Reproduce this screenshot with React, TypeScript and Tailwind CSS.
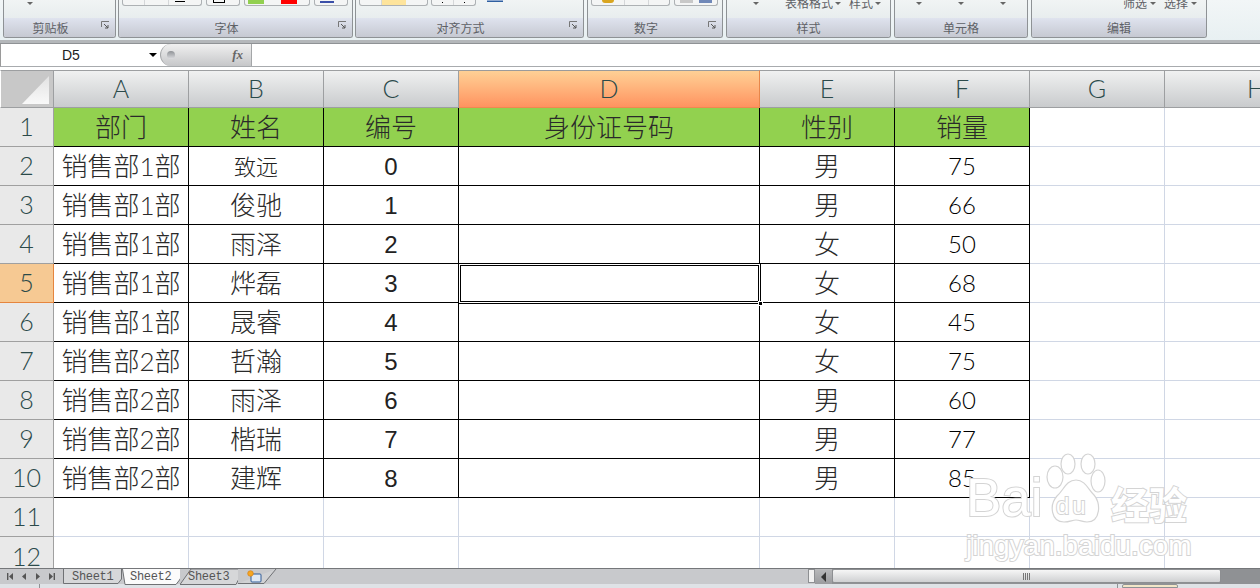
import { FC, ReactNode } from 'react';

const rows = [
    { dept: '销售部1部', name: '致远', num: 0, sex: '男', sales: 75 },
    { dept: '销售部1部', name: '俊驰', num: 1, sex: '男', sales: 66 },
    { dept: '销售部1部', name: '雨泽', num: 2, sex: '女', sales: 50 },
    { dept: '销售部1部', name: '烨磊', num: 3, sex: '女', sales: 68 },
    { dept: '销售部1部', name: '晟睿', num: 4, sex: '女', sales: 45 },
    { dept: '销售部2部', name: '哲瀚', num: 5, sex: '女', sales: 75 },
    { dept: '销售部2部', name: '雨泽', num: 6, sex: '男', sales: 60 },
    { dept: '销售部2部', name: '楷瑞', num: 7, sex: '男', sales: 77 },
    { dept: '销售部2部', name: '建辉', num: 8, sex: '男', sales: 85 },
];

const cjk = "font-['Lato','Noto_Sans_CJK_SC',sans-serif] font-light";
const gridCols = 'grid grid-cols-[54px_135px_135px_135px_301px_135px_135px_135px_184px]';

const Launcher = () => (
    <svg width="9" height="9" viewBox="0 0 9 9" className="absolute right-[5px] top-[3px]">
        <path d="M0.5 6V0.5H8" fill="none" stroke="#777" />
        <path d="M3 3l4 4M7 4v3H4" fill="none" stroke="#555" />
    </svg>
);

const Group: FC<{ width: string; label: string; launcher?: boolean; children?: ReactNode }> = ({ width, label, launcher, children }) => (
    <div className={`${width} h-[38px] flex flex-col shrink-0 border-x border-b border-[#8e9295] rounded-b-[3px] overflow-hidden`}>
        <div className="h-[18px] bg-gradient-to-b from-[#f1f4f4] to-[#e8edee] overflow-hidden flex items-start">{children}</div>
        <div className={`h-[19px] relative bg-gradient-to-b from-[#dfe3ee] to-[#c6c9d2] flex items-center justify-center text-[12px] text-[#5e6166] font-['Noto_Sans_CJK_SC',sans-serif] ${launcher ? 'pr-[18px]' : ''}`}>
            {label}
            {launcher && <Launcher />}
        </div>
    </div>
);

const Btn: FC<{ className: string; children?: ReactNode }> = ({ className, children }) => (
    <div className={`${className} h-[6px] border-x border-b border-[#adb1b4] rounded-b-[3px] bg-[#f4f5f5] flex overflow-hidden shrink-0`}>{children}</div>
);

const Caret = ({ className = '' }: { className?: string }) => (
    <span className={`${className} w-0 h-0 border-x-[3px] border-x-transparent border-t-[3px] border-t-[#666] shrink-0 mt-[2px]`} />
);

const CutText: FC<{ className: string; text: string }> = ({ className, text }) => (
    <span className={`${className} h-[9px] text-[12px] leading-[5px] text-[#5e6166] font-['Noto_Sans_CJK_SC',sans-serif] shrink-0`}>{text}</span>
);

const Ribbon = () => (
    <div className="h-[40px] bg-gradient-to-b from-[#f2f6f7] to-[#e8f0f2] flex pl-[3px] gap-[3px] shrink-0">
        <Group width="w-[113px]" label="剪贴板" launcher>
            <Caret className="ml-[23px]" />
        </Group>
        <Group width="w-[235px] -ml-px" label="字体" launcher>
            <Btn className="ml-[3px] w-[80px]">
                <div className="w-[22px] border-r border-[#d5d7d9]" />
                <div className="w-[24px] border-r border-[#d5d7d9]" />
                <div className="ml-[6px] w-[10px] h-[1px] mt-[1px] bg-black" />
            </Btn>
            <Btn className="ml-[4px] w-[34px]">
                <div className="ml-[6px] w-[12px] h-[3px] border-x border-b border-black" />
            </Btn>
            <Btn className="ml-[4px] w-[66px]">
                <div className="ml-[3px] w-[16px] h-[4px] bg-[#92d050]" />
                <div className="ml-[17px] w-[16px] h-[4px] bg-[#ff0000]" />
            </Btn>
            <Btn className="ml-[4px] w-[34px]">
                <div className="ml-[5px] w-[14px] h-[3px] border-b-2 border-[#3a4fa8]" />
            </Btn>
        </Group>
        <Group width="w-[229px] -ml-px" label="对齐方式" launcher>
            <Btn className="ml-[3px] w-[69px]">
                <div className="w-[22px] border-r border-[#d5d7d9]" />
                <div className="w-[24px] bg-[#fee49c]" />
            </Btn>
            <Btn className="ml-[3px] w-[45px]">
                <div className="w-[22px] border-r border-[#d5d7d9] flex justify-center"><div className="w-px h-px mt-[2px] bg-black" /></div>
                <div className="w-[22px] flex justify-center"><div className="w-px h-px mt-[2px] bg-black" /></div>
            </Btn>
            <div className="ml-[11px] w-[16px] h-[2px] bg-[#8fa9d0] border-b border-[#2f5fa0] shrink-0" />
        </Group>
        <Group width="w-[136px]" label="数字" launcher>
            <Btn className="ml-[3px] w-[79px]">
                <div className="w-[33px] border-r border-[#d5d7d9] flex justify-center"><div className="w-[12px] h-[3px] rounded-b bg-[#d9a520]" /></div>
                <div className="w-[24px] border-r border-[#d5d7d9]" />
            </Btn>
            <Btn className="ml-[4px] w-[44px]">
                <div className="ml-[5px] w-[13px] h-[3px] bg-[#c8c8c8]" />
                <div className="ml-[6px] w-[13px] h-[3px] bg-[#7088b8]" />
            </Btn>
        </Group>
        <Group width="w-[165px]" label="样式">
            <Caret className="ml-[26px]" />
            <CutText className="ml-[26px]" text="表格格式" />
            <Caret className="ml-[2px]" />
            <CutText className="ml-[8px]" text="样式" />
            <Caret className="ml-[2px]" />
        </Group>
        <Group width="w-[134px]" label="单元格">
            <Caret className="ml-[21px]" />
            <Caret className="ml-[36px]" />
            <Caret className="ml-[36px]" />
        </Group>
        <Group width="w-[176px]" label="编辑">
            <CutText className="ml-[91px]" text="筛选" />
            <Caret className="ml-[3px]" />
            <CutText className="ml-[8px]" text="选择" />
            <Caret className="ml-[3px]" />
        </Group>
    </div>
);

const FormulaBar = () => (
    <>
        <div className="h-[4px] bg-[#b4b7ba] border-b border-[#8f9295] shrink-0" />
        <div className="h-[23px] flex border-b border-[#a8abae] border-l border-l-[#9a9a9a] bg-white shrink-0">
            <div className="w-[159px] flex items-center pl-[61px] text-[14px] text-[#222] font-['Liberation_Sans',sans-serif]">
                D5
                <span className="ml-[69px] w-0 h-0 border-x-[4px] border-x-transparent border-t-[4px] border-t-black" />
            </div>
            <div className="w-[92px] rounded-l-[11px] border border-[#a4a6a8] border-y-0 bg-gradient-to-b from-[#f0f0f0] to-[#c6c7c9] flex items-center pl-[6px] pr-[8px] justify-between">
                <span className="w-[8px] h-[8px] rounded-full bg-gradient-to-b from-[#8f9296] to-[#dcdde0]" />
                <span className="text-[13px] italic font-bold text-[#666] font-['Liberation_Serif',serif]">fx</span>
            </div>
        </div>
        <div className="h-[3px] bg-white shrink-0" />
    </>
);

const ColHead: FC<{ label: string; active?: boolean }> = ({ label, active }) => (
    <div className={`h-[38px] flex items-center justify-center text-[25px] border-r border-y ${cjk} ${active ? 'bg-gradient-to-b from-[#fed095] to-[#fe9360] text-[#2b4a4a] border-x-[#e8864a] border-t-[#9b9b9b] border-b-[#f08850]' : 'bg-gradient-to-b from-[#f0f1f1] to-[#c9cbcd] text-[#2b4a4a] border-[#9d9fa1]'}`}>
        {label}
    </div>
);

const RowHead: FC<{ n: number; active?: boolean; last?: boolean }> = ({ n, active, last }) => (
    <div className={`h-[39px] flex items-center justify-center text-[25px] border-r border-b text-[#2b4a4a] ${cjk} ${active ? 'bg-[#f6c993] border-[#e5853e]' : 'bg-[#e9e9e9] border-[#a0a0a0]'} ${last ? 'border-b-0' : ''}`}>
        {n}
    </div>
);

const Cell: FC<{ green?: boolean; font?: string; children?: ReactNode }> = ({ green, font = `${cjk} text-[26px] text-[#2a2a2a]`, children }) => (
    <div className={`h-[39px] flex items-center justify-center border-r border-b border-black ${green ? 'bg-[#92d14f]' : 'bg-white'} ${font}`}>
        {children}
    </div>
);

const Blank = () => <div className="h-[39px] border-r border-b border-[#d0d7e5] bg-white" />;

// D5 selection: double outline, sits over the neighbouring borders
const Selection = () => (
    <div className="absolute -top-px -left-px -right-[2px] -bottom-[2px] z-10 border border-black">
        <div className="h-full border border-white">
            <div className="h-full border border-black" />
        </div>
        <div className="absolute -right-[3px] -bottom-[3px] w-[5px] h-[5px] bg-black border border-white" />
    </div>
);

const Sheet = () => (
    <div className="flex-1 overflow-hidden min-h-0">
        <div className={gridCols}>
            <div className="h-[38px] border-r border-y border-[#9d9fa1] bg-[#c8c8c8] relative border-l border-l-white">
                <svg width="52" height="36" viewBox="0 0 52 36" className="block">
                    <defs>
                        <linearGradient id="corner" x1="0" y1="0" x2="0" y2="1">
                            <stop offset="0" stopColor="#e2e2e2" />
                            <stop offset="1" stopColor="#f9f9f9" />
                        </linearGradient>
                    </defs>
                    <polygon points="48,5 21,33 48,33" fill="url(#corner)" />
                </svg>
            </div>
            {['A', 'B', 'C', 'D', 'E', 'F', 'G', 'H'].map((c) => (
                <ColHead key={c} label={c} active={c === 'D'} />
            ))}

            <RowHead n={1} />
            {['部门', '姓名', '编号', '身份证号码', '性别', '销量'].map((t) => (
                <Cell key={t} green>{t}</Cell>
            ))}
            <Blank />
            <Blank />

            {rows.map((r, i) => (
                <div key={i} className="contents">
                    <RowHead n={i + 2} active={i === 3} />
                    <Cell>{r.dept}</Cell>
                    {i === 0 ? <Cell font={`${cjk} text-[22px] text-[#222]`}>{r.name}</Cell> : <Cell>{r.name}</Cell>}
                    <Cell font="font-['Liberation_Sans',sans-serif] text-[24px] text-[#222] pt-[1px]">{r.num}</Cell>
                    <div className="h-[39px] relative border-r border-b border-black bg-white">
                        {i === 3 && <Selection />}
                    </div>
                    <Cell>{r.sex}</Cell>
                    <Cell font={`${cjk} text-[24px] text-black`}>{r.sales}</Cell>
                    <Blank />
                    <Blank />
                </div>
            ))}

            {[11, 12].map((n) => (
                <div key={n} className="contents">
                    <RowHead n={n} last={n === 12} />
                    {[0, 1, 2, 3, 4, 5, 6, 7].map((c) => (
                        <Blank key={c} />
                    ))}
                </div>
            ))}
        </div>
    </div>
);

const NavArrow: FC<{ dir: 'first' | 'prev' | 'next' | 'last' }> = ({ dir }) => {
    const d = {
        first: 'M1 1v7h1.4V1zM7 1L3 4.5 7 8z',
        prev: 'M6 1L2 4.5 6 8z',
        next: 'M2 1l4 3.5L2 8z',
        last: 'M7 1v7H5.6V1zM1 1l4 3.5L1 8z',
    }[dir];
    return (
        <svg width="8" height="9" viewBox="0 0 8 9">
            <path d={d} fill="#555" />
        </svg>
    );
};

const Tab: FC<{ label: string; width: string; active?: boolean; path: string; children?: ReactNode }> = ({ label, width, active, path, children }) => (
    <div className={`${width} h-[16px] relative flex items-center text-[12px] tracking-[-0.3px] text-[#555] font-['Liberation_Mono',monospace] shrink-0`}>
        <svg width="100%" height="16" className="absolute inset-0" preserveAspectRatio="none">
            <path d={path} fill={active ? '#fbfbfb' : '#d6d7d9'} stroke="#6f7174" />
        </svg>
        <span className="relative">{label}</span>
        {children}
    </div>
);

const TabBar = () => (
    <div className="h-[16px] flex bg-[#c8c9cc] border-t border-[#75777a] shrink-0">
        <div className="w-[62px] flex items-center justify-around px-[3px] shrink-0">
            <NavArrow dir="first" />
            <NavArrow dir="prev" />
            <NavArrow dir="next" />
            <NavArrow dir="last" />
        </div>
        <div className="w-[215px] flex shrink-0">
            <Tab label="Sheet1" width="w-[60px] pl-[10px]" path="M1.5 0V14.5H56L59.5 10V0" />
            <Tab label="Sheet2" width="w-[58px] pl-[8px]" active path="M0.5 0L3 15.5H54L57.5 11L64 0" />
            <Tab label="Sheet3" width="w-[58px] pl-[8px]" path="M0 15.5L11 0H64L56 15.5Z" />
            <div className="w-[39px] h-[15px] relative flex items-center pl-[9px] shrink-0">
                <svg width="39" height="15" className="absolute inset-0">
                    <path d="M0 14.5H26L38 0" fill="#d0d1d3" stroke="#6f7174" />
                </svg>
                <svg width="15" height="13" viewBox="0 0 15 13" className="relative">
                    <rect x="4" y="4" width="10" height="8" rx="1" fill="#dfe8f4" stroke="#2e5a96" />
                    <circle cx="3.5" cy="3.5" r="2.8" fill="#f6a623" stroke="#d07a10" strokeWidth="0.6" />
                </svg>
            </div>
        </div>
        <div className="w-[531px] shrink-0" />
        <div className="w-[7px] h-[14px] bg-[#f1f1f1] border border-[#8d8f92] shrink-0" />
        <div className="flex-1 flex bg-[#8f9194]">
            <div className="w-[17px] flex items-center justify-center bg-gradient-to-b from-[#b8b9bb] to-[#9a9b9e]">
                <span className="w-0 h-0 border-y-[5px] border-y-transparent border-r-[5px] border-r-[#333]" />
            </div>
            <div className="w-[389px] h-[14px] bg-gradient-to-b from-[#f6f6f6] to-[#cfd0d2] border border-[#8d8f92] rounded-[2px] flex items-center justify-center gap-px">
                <span className="w-px h-[7px] bg-[#777]" />
                <span className="w-px h-[7px] bg-[#777]" />
                <span className="w-px h-[7px] bg-[#777]" />
                <span className="w-px h-[7px] bg-[#777]" />
            </div>
        </div>
    </div>
);

const StatusBar = () => (
    <div className="h-[4px] bg-[#dfe2e6] flex shrink-0 overflow-hidden">
        <div className="ml-[39px] w-px bg-[#8f9295]" />
        <div className="ml-[1077px] w-px bg-[#8f9295]" />
        <div className="ml-[4px] w-[56px] border border-[#8f9295] rounded-t-[2px] bg-[#f2e6c8]" />
    </div>
);

const wmText = "text-white [-webkit-text-stroke:2px_#d4d4d4] [paint-order:stroke_fill] font-['Liberation_Sans',sans-serif]";

const Watermark = () => (
    <div className="absolute left-[966px] top-[455px] w-[230px] z-20 flex flex-col">
        <div className="flex items-end h-[70px]">
            <span className={`${wmText} text-[53px] leading-[50px] mb-[2px] w-[80px]`}>Bai</span>
            <div className="relative w-[60px] h-[72px] shrink-0">
                <svg width="60" height="72" viewBox="0 0 60 72" className="block">
                    <g fill="#fff" stroke="#d4d4d4" strokeWidth="1.2">
                        <ellipse cx="9" cy="24" rx="8" ry="11" />
                        <ellipse cx="22" cy="11" rx="7" ry="10" />
                        <ellipse cx="42" cy="11" rx="7" ry="10" />
                        <ellipse cx="52" cy="28" rx="7" ry="11" />
                        <path d="M30 27c9 0 12 9 18 15 7 7 7 27-7 27-5 0-7-2-11-2s-6 2-12 2C5 69 3 52 11 43c7-6 9-16 19-16z" />
                    </g>
                </svg>
                <span className={`${wmText} absolute left-[10px] top-[41px] text-[24px] leading-[24px] tracking-[3px]`}>du</span>
            </div>
            <span className={`${wmText} text-[38px] font-bold leading-[44px] ml-[5px] font-['Noto_Sans_CJK_SC',sans-serif] whitespace-nowrap`}>经验</span>
        </div>
        <span className={`${wmText} text-[28px] leading-[32px] mt-[5px] whitespace-nowrap`}>jingyan.baidu.com</span>
    </div>
);

const App: FC = () => {
    return (
        <div className="w-[1260px] h-[588px] relative overflow-hidden flex flex-col bg-white">
            <Ribbon />
            <FormulaBar />
            <Sheet />
            <TabBar />
            <StatusBar />
            <Watermark />
        </div>
    );
};

export default App;
